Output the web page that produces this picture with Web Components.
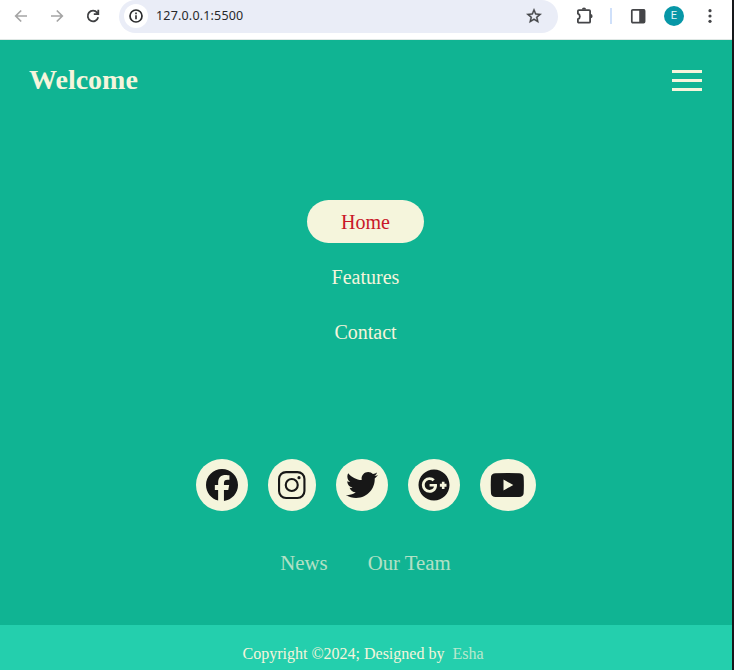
<!DOCTYPE html>
<html lang="en">
<head>
<meta charset="utf-8">
<title>Welcome</title>
<style>
html,body{margin:0;height:100%;overflow:hidden;background:#17181b}
body{font-family:"Liberation Serif","Times New Roman",serif}
</style>
</head>
<body>
<app-window></app-window>
<script>
const define = (name, html) => {
  const t = document.createElement('template');
  t.innerHTML = html;
  customElements.define(name, class extends HTMLElement {
    constructor() {
      super();
      this.attachShadow({mode: 'open'}).appendChild(t.content.cloneNode(true));
    }
  });
};

// Each entry: view box width and the markup of the glyph, on a 512 unit high grid.
const ICONS = {
  facebook: [512, '<path d="M512 256C512 114.6 397.4 0 256 0S0 114.6 0 256C0 376 82.7 476.8 194.2 504.5V334.2H141.4V256h52.8V222.3c0-87.1 39.4-127.5 125-127.5c16.2 0 44.2 3.2 55.7 6.4V172c-6-.6-16.5-1-29.6-1c-42 0-58.2 15.9-58.2 57.2V256h83.6l-14.4 78.2H287V510.1C413.8 494.8 512 386.9 512 256z"/>'],
  instagram: [448, '<g fill="none" stroke="#171717" stroke-width="34"><rect x="17" y="49" width="406" height="414" rx="112"/><circle cx="220" cy="256" r="96"/></g><circle cx="336" cy="138" r="25"/>'],
  twitter: [512, '<path d="M459.37 151.716c.325 4.548.325 9.097.325 13.645 0 138.72-105.583 298.558-298.558 298.558-59.452 0-114.68-17.219-161.137-47.106 8.447.974 16.568 1.299 25.34 1.299 49.055 0 94.213-16.568 130.274-44.832-46.132-.975-84.792-31.188-98.112-72.772 6.498.974 12.995 1.624 19.818 1.624 9.421 0 18.843-1.3 27.614-3.573-48.081-9.747-84.143-51.98-84.143-102.985v-1.299c13.969 7.797 30.214 12.67 47.431 13.319-28.264-18.843-46.781-51.005-46.781-87.391 0-19.492 5.197-37.36 14.294-52.954 51.655 63.675 129.3 105.258 216.365 109.807-1.624-7.797-2.599-15.918-2.599-24.04 0-57.828 46.782-104.934 104.934-104.934 30.213 0 57.502 12.67 76.67 33.137 23.715-4.548 46.456-13.32 66.599-25.34-7.798 24.366-24.366 44.833-46.132 57.827 21.117-2.273 41.584-8.122 60.426-16.243-14.292 20.791-32.161 39.308-52.628 54.253z"/>'],
  google: [512, '<path d="M256,8C119.1,8,8,119.1,8,256S119.1,504,256,504,504,392.9,504,256,392.9,8,256,8ZM185.3,380a124,124,0,0,1,0-248c31.3,0,60.1,11,83,32.3l-33.6,32.6c-13.2-12.9-31.3-19.1-49.4-19.1-42.9,0-77.2,35.5-77.2,78.1S142.3,334,185.3,334c32.6,0,64.9-19.1,70.1-53.3H185.3V238.1H302.2a109.2,109.2,0,0,1,1.9,20.7c0,70.8-47.5,121.2-118.8,121.2Z"/><path d="M424 282v36H382V282H350V236H382V202h42v34h32v46Z" fill="#f5f5dc"/>'],
  youtube: [576, '<path d="M90 66Q288 60 466 66Q530 68 538 122Q546 256 538 390Q530 444 466 446Q288 452 90 446Q24 444 16 390Q8 256 16 122Q24 68 90 66ZM216 168V344L372 256Z"/>']
};

customElements.define('social-icon', class extends HTMLElement {
  connectedCallback() {
    const [w, glyph] = ICONS[this.getAttribute('name')];
    this.attachShadow({mode: 'open'}).innerHTML = `
      <style>:host{display:block;padding:10px;border-radius:50%;background:#f5f5dc;height:32px}
      svg{display:block;fill:#171717}</style>
      <svg width="${w / 16}" height="32" viewBox="0 0 ${w} 512">${glyph}</svg>`;
  }
});

define('browser-bar', `
<style>
:host{display:flex;align-items:flex-start;height:39px;background:#fff;border-bottom:1px solid #dfe8e5;box-sizing:content-box;font-family:"Noto Sans","Open Sans",sans-serif}
svg{display:block;flex:none}
.nav{display:flex;gap:18px;padding:7px 0 0 12px;width:119px;box-sizing:border-box;flex:none}
.url{display:flex;align-items:center;width:439px;height:33px;box-sizing:border-box;padding:0 15px 1px 5px;background:#eaedf7;border-radius:17px;flex:none}
.info{width:24px;height:24px;border-radius:50%;background:#fff;display:grid;place-items:center;margin-right:8px}
.addr{font-size:12.5px;line-height:16px;color:#27282b;flex:1;letter-spacing:.18px}
.tools{display:flex;align-items:center;height:32px;padding-left:17px}
.sep{width:2px;height:16px;background:#cfe0fa;margin:0 17px 0 15px}
.me{width:20px;height:20px;border-radius:50%;background:#0797a7;color:#e4f6f8;font:11px/20px Roboto,sans-serif;text-align:center;margin:0 17px 0 17px}
</style>
<div class="nav">
<svg width="18" height="18" viewBox="0 0 18 18" fill="none" stroke="#a5a5a5" stroke-width="1.7"><path d="M15 9H4M9.2 3.5 3.7 9l5.5 5.5"/></svg>
<svg width="18" height="18" viewBox="0 0 18 18" fill="none" stroke="#a5a5a5" stroke-width="1.7"><path d="M3 9h11M8.8 3.5 14.3 9l-5.5 5.5"/></svg>
<svg width="18" height="18" viewBox="0 0 18 18" fill="none" stroke="#3f4042" stroke-width="1.8"><path d="M14.2 10.3A5.3 5.3 0 1 1 13.2 5.7L14.3 7M14.3 2.8V7.2H9.8"/></svg>
</div>
<div class="url">
<div class="info"><svg width="14" height="14" viewBox="0 0 14 14"><circle cx="7" cy="7" r="6" fill="none" stroke="#2a2b2d" stroke-width="1.7"/><path d="M6.2 6.3h1.6v4H6.2zM6.2 3.6h1.6v1.6H6.2z" fill="#2a2b2d"/></svg></div>
<span class="addr">127.0.0.1:5500</span>
<svg width="18" height="18" viewBox="0 0 24 24" fill="#444548"><path d="M22 9.24l-7.19-.62L12 2 9.19 8.63 2 9.24l5.46 4.73L5.82 21 12 17.27 18.18 21l-1.63-7.03L22 9.24zM12 15.4l-3.76 2.27 1-4.28-3.32-2.88 4.38-.38L12 6.1l1.71 4.04 4.38.38-3.32 2.88 1 4.28L12 15.4z" stroke="#444548" stroke-width=".5"/></svg>
</div>
<div class="tools">
<svg width="20" height="20" viewBox="0 0 20 20"><path d="M3.9 4.1h10.2q1 0 1 1v10.6q0 1-1 1H3.9q-1 0-1-1v-2.6c2.6-.9 2.6-4.5 0-5.4V5.1q0-1 1-1z" fill="none" stroke="#444548" stroke-width="1.8" stroke-linejoin="round"/><path d="M6.9 3.6a2.1 2.1 0 0 1 4.2 0zM15.5 8.1a2.1 2.1 0 0 1 0 4.2z" fill="#444548"/></svg>
<div class="sep"></div>
<svg width="18" height="18" viewBox="0 0 18 18"><rect x="2.8" y="2.8" width="12.8" height="12.8" rx="1" fill="none" stroke="#444548" stroke-width="1.7"/><path d="M10.2 2.5h5.5v13.2h-5.5z" fill="#444548"/></svg>
<div class="me">E</div>
<svg width="18" height="18" viewBox="0 0 18 18" fill="#444548"><circle cx="9" cy="3.7" r="1.6"/><circle cx="9" cy="9" r="1.6"/><circle cx="9" cy="14.3" r="1.6"/></svg>
</div>`);

define('menu-button', `
<style>:host{display:flex;flex-direction:column;gap:6px;width:30px}i{height:3px;background:#f5f5dc}</style>
<i></i><i></i><i></i>`);

define('site-header', `
<style>:host{display:flex;align-items:flex-start;justify-content:space-between;padding:24px 30px 0 29px;height:136px;box-sizing:content-box}
h1{margin:0;font-size:28px;line-height:32px;color:#f5f5dc}menu-button{margin-top:6px}</style>
<h1><slot></slot></h1><menu-button></menu-button>`);

define('nav-item', `
<style>:host{display:flex;align-items:center;height:43px;padding:2px 34px 0;box-sizing:border-box;border-radius:22px;font-size:20px;color:#f5f5dc}
:host([active]){background:#f5f5dc;color:#c91828}</style><slot></slot>`);

define('nav-list', `
<style>:host{display:flex;flex-direction:column;align-items:center;gap:12px;padding-right:1px}</style><slot></slot>`);

define('social-row', `
<style>:host{display:flex;justify-content:center;gap:20px;margin-top:106px}</style><slot></slot>`);

define('quiet-links', `
<style>:host{display:flex;justify-content:center;gap:40px;margin-top:40px;padding-right:1px;font-size:20.8px;line-height:24px;color:#f5f5dc}
::slotted(*){opacity:.7}</style><slot></slot>`);

define('site-footer', `
<style>:host{display:flex;justify-content:center;gap:8px;margin-top:auto;height:45px;padding:20px 6px 0 0;box-sizing:border-box;background:#24cfad;color:#f5f5dc;font-size:16px;line-height:18px;white-space:nowrap}
::slotted(*){opacity:.7}</style><span>Copyright ©2024; Designed by</span><slot></slot>`);

define('app-window', `
<style>
:host{display:flex;flex-direction:column;width:732px;height:670px;background:#10b493}
</style>
<browser-bar></browser-bar>
<site-header>Welcome</site-header>
<nav-list><nav-item active>Home</nav-item><nav-item>Features</nav-item><nav-item>Contact</nav-item></nav-list>
<social-row><social-icon name="facebook"></social-icon><social-icon name="instagram"></social-icon><social-icon name="twitter"></social-icon><social-icon name="google"></social-icon><social-icon name="youtube"></social-icon></social-row>
<quiet-links><span>News</span><span>Our Team</span></quiet-links>
<site-footer><span>Esha</span></site-footer>`);
</script>
</body>
</html>
